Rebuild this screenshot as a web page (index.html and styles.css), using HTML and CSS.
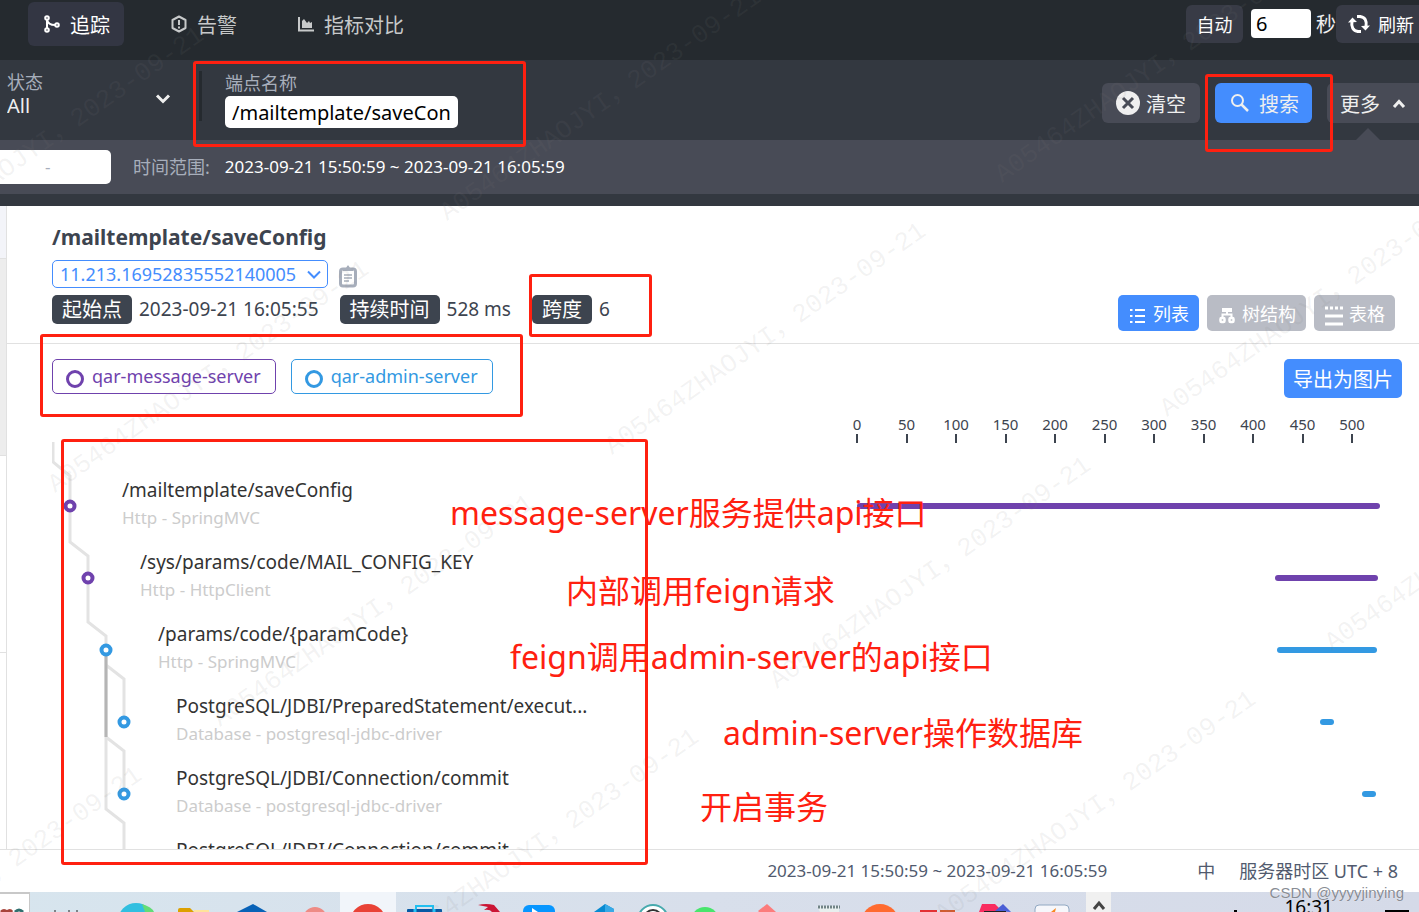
FILE: index.html
```html
<!DOCTYPE html>
<html lang="zh-CN">
<head>
<meta charset="utf-8">
<title>追踪</title>
<link rel="stylesheet" href="styles.css">
</head>
<body>
<header class="topbar">
  <nav class="tabs">
    <a class="tab active" href="#trace"><svg width="16" height="18" viewBox="0 0 16 18" fill="none" stroke="currentColor" stroke-width="2"><circle cx="3" cy="3" r="1.8"/><circle cx="3" cy="15" r="1.8"/><circle cx="13" cy="10" r="1.8"/><path d="M3 5v8M3 5c1 4 4 5 8 5"/></svg>追踪</a>
    <a class="tab" href="#alarm"><svg width="16" height="18" viewBox="0 0 16 18" fill="none" stroke="currentColor" stroke-width="2"><path d="M8 1.500l6.500 3.500v8L8 16.500 1.500 13V5z" stroke-linejoin="round"/><path d="M8 5v5M8 11.500v2"/></svg>告警</a>
    <a class="tab" href="#compare"><svg width="16" height="18" viewBox="0 0 16 18"><path d="M1 2v13.500h15" fill="none" stroke="currentColor" stroke-width="2"/><path d="M4 13V6l2-2 3 4 2-2 1 2 2-1v6z" fill="currentColor"/></svg>指标对比</a>
  </nav>
  <div class="reload">
    <button class="dark-btn auto" type="button">自动</button>
    <input class="seconds" type="text" value="6" aria-label="秒">
    <span class="unit">秒</span>
    <button class="dark-btn refresh" type="button"><svg width="22" height="20" viewBox="0 0 22 20" fill="none" stroke="currentColor" stroke-width="3"><path d="M10 17.500C5 17 3 13 4 7M12 2.500c5 .5 7 4 6 10"/><path d="M0 8.500L4.500 3.500 9 8zM22 11.500L17.500 16.500 13 12z" fill="currentColor" stroke="none"/><path d="M9 2.500h4M9 17.500h4"/></svg>刷新</button>
  </div>
</header>

<section class="filters">
  <div class="state">
    <label for="state">状态</label>
    <select id="state"><option>All</option></select>
    <svg class="state-arrow" width="16" height="10" viewBox="0 0 16 10" fill="none" stroke="currentColor" stroke-width="3"><path d="M2 1.500l6 6 6-6"/></svg>
  </div>
  <div class="endpoint">
    <label for="endpoint">端点名称</label>
    <input id="endpoint" type="text" value="/mailtemplate/saveCon">
  </div>
  <div class="actions">
    <button class="btn clear" type="button"><svg width="24" height="24" viewBox="0 0 24 24"><circle cx="12" cy="12" r="12" fill="#efefef"/><path d="M7 7l10 10M17 7L7 17" stroke="#484b56" stroke-width="3"/></svg>清空</button>
    <button class="btn search" type="button"><svg width="18" height="18" viewBox="0 0 18 18" fill="none" stroke="currentColor" stroke-width="2"><circle cx="6.500" cy="6.500" r="5.500"/><path d="M10.500 10.500l6.500 6.500" stroke-width="2.500"/></svg>搜索</button>
    <button class="btn more" type="button">更多<svg width="14" height="9" viewBox="0 0 14 9" fill="none" stroke="currentColor" stroke-width="3"><path d="M2 8l5-5.500L12 8"/></svg></button>
  </div>
</section>

<section class="range">
  <input class="duration" type="text" value="-" aria-label="持续时间">
  <span class="range-label">时间范围:</span>
  <span class="range-value">2023-09-21 15:50:59 ~ 2023-09-21 16:05:59</span>
</section>

<main class="content">
  <aside class="trace-list"><div class="item first"></div><div class="item selected"></div><div class="item"></div></aside>
  <article class="detail">
    <header class="detail-head">
      <h1>/mailtemplate/saveConfig</h1>
      <div class="id-row">
        <div class="trace-id">
          <select aria-label="Trace ID"><option>11.213.16952835552140005</option></select>
          <svg width="14" height="9" viewBox="0 0 14 9" fill="none" stroke="currentColor" stroke-width="2"><path d="M1 1.500l6 6 6-6"/></svg>
        </div>
        <button class="copy" type="button" aria-label="复制"><svg width="18" height="23" viewBox="0 0 18 23"><rect x="1.500" y="4" width="15" height="17" rx="2.500" fill="none" stroke="#a7aebb" stroke-width="3"/><path d="M4 6V3h3l1.500-2.500h1L11 3h3v3z" fill="#a7aebb"/><path d="M5 10h8M5 13h8M5 16h5" stroke="#a7aebb" stroke-width="1.500"/></svg></button>
      </div>
      <div class="meta-row">
        <div class="meta">
          <span class="tag">起始点</span><span class="value">2023-09-21 16:05:55</span>
          <span class="tag">持续时间</span><span class="value">528 ms</span>
          <span class="tag">跨度</span><span class="value">6</span>
        </div>
        <div class="views">
          <button class="view on" type="button"><svg width="16" height="18" viewBox="0 0 16 18" stroke="currentColor" stroke-width="2"><path d="M5 4h10M5 10h10M5 16h10"/><path d="M0 4h2.500M0 10h2.500M0 16h2.500"/></svg>列表</button>
          <button class="view" type="button"><svg width="16" height="18" viewBox="0 0 16 18" fill="none" stroke="currentColor"><path d="M3 2h10v4H3z" fill="currentColor" stroke="none"/><path d="M8 5v3M3.500 12V8.500h9V12" stroke-width="2"/><rect x="1.500" y="12" width="4" height="4" rx="1" stroke-width="2.500"/><rect x="10.500" y="12" width="4" height="4" rx="1" stroke-width="2.500"/></svg>树结构</button>
          <button class="view table" type="button"><svg width="20" height="22" viewBox="0 0 20 22" stroke="currentColor" stroke-width="3"><path d="M1 4h18" stroke-dasharray="3 2"/><path d="M1 12h18M1 20h18"/></svg>表格</button>
        </div>
      </div>
    </header>

    <div class="legend-row">
      <div class="legend">
        <span class="service purple"><i class="ring"></i>qar-message-server</span>
        <span class="service blue"><i class="ring"></i>qar-admin-server</span>
      </div>
      <button class="export" type="button">导出为图片</button>
    </div>

    <div class="axis-row">
      <div class="axis">
        <span>0</span><span>50</span><span>100</span><span>150</span><span>200</span><span>250</span><span>300</span><span>350</span><span>400</span><span>450</span><span>500</span>
      </div>
    </div>

    <div class="tree">
      <svg class="links" width="90" height="440" viewBox="0 0 90 440" fill="none" stroke-width="3">
        <g stroke="#e3e3e3">
          <path d="M1 0v20l17 14v66l18 14v66l18 14v20"/>
          <path d="M54 208v54M54 223l18 14v42M54 262v90M54 295l18 14v42M54 352v15l18 14v60"/>
        </g>
        <path d="M54 210v85" stroke="#b5b5b5"/>
        <g fill="#fff" stroke-width="4"><g stroke="#6f42ad"><circle cx="18" cy="64" r="4.500"/><circle cx="36" cy="136" r="4.500"/></g>
        <g stroke="#3399e2"><circle cx="54" cy="208" r="4.500"/><circle cx="72" cy="280" r="4.500"/><circle cx="72" cy="352" r="4.500"/></g></g>
      </svg>
      <ul class="spans">
        <li class="span d1"><div class="name"><b>/mailtemplate/saveConfig</b><small>Http - SpringMVC</small></div><div class="line"><i class="bar purple" style="margin-left:0%;width:100%"></i></div></li>
        <li class="span d2"><div class="name"><b>/sys/params/code/MAIL_CONFIG_KEY</b><small>Http - HttpClient</small></div><div class="line"><i class="bar purple" style="margin-left:79.9%;width:19.7%"></i></div></li>
        <li class="span d3"><div class="name"><b>/params/code/{paramCode}</b><small>Http - SpringMVC</small></div><div class="line"><i class="bar blue" style="margin-left:80.3%;width:19.1%"></i></div></li>
        <li class="span d4"><div class="name"><b>PostgreSQL/JDBI/PreparedStatement/execut...</b><small>Database - postgresql-jdbc-driver</small></div><div class="line"><i class="bar blue" style="margin-left:88.5%;width:2.7%"></i></div></li>
        <li class="span d4"><div class="name"><b>PostgreSQL/JDBI/Connection/commit</b><small>Database - postgresql-jdbc-driver</small></div><div class="line"><i class="bar blue" style="margin-left:96.6%;width:2.7%"></i></div></li>
        <li class="span d4"><div class="name"><b>PostgreSQL/JDBI/Connection/commit</b></div></li>
      </ul>
    </div>
  </article>
</main>

<footer class="status">
  <span>2023-09-21 15:50:59 ~ 2023-09-21 16:05:59</span>
  <span class="lang">中</span>
  <span class="zone">服务器时区 UTC + 8</span>
</footer>

<div class="taskbar">
  <svg class="apps" width="1419" height="20" viewBox="0 0 1419 20">
    <rect width="30" height="20" fill="#c8c8c8"/><rect y="2" width="29" height="18" fill="#fff"/>
    <path d="M1 20q3-3 6 0M7 20q3-3 5 0" stroke="#a8433b" stroke-width="3" fill="none"/><path d="M15 20q4-4 8 0" stroke="#31706f" stroke-width="3" fill="none"/>
    <path d="M55 18v2M69 18v2M77 18v2" stroke="#222" stroke-width="1"/>
    <circle cx="136" cy="29" r="18" fill="#31bfe0"/><path d="M142 12q10 3 12 8h-9z" fill="#63dc76"/>
    <path d="M178 20v-2q0-2 2-2h10l4 4z" fill="#dda000"/><path d="M194 18h15v2h-15z" fill="#ffe39a"/>
    <path d="M237 20l16-8 14 8z" fill="#0862b7"/>
    <circle cx="315" cy="27" r="12" fill="#ee8b85"/>
    <rect x="340" width="56" height="20" fill="#f1f5fa"/><circle cx="368" cy="30" r="18" fill="#e94236"/>
    <path d="M416 18v-4h17v4" fill="none" stroke="#22bff0" stroke-width="2"/><rect x="407" y="17" width="35" height="7" rx="1" fill="#0759a5"/><path d="M415 17v3M434 17v3" stroke="#25c3f5" stroke-width="3"/>
    <path d="M478 13q8-2 16 0l6 7h-8q-2-3-8-2l4-3z" fill="#cb1635"/>
    <rect x="523" y="13" width="32" height="15" rx="6" fill="#0796ff"/><path d="M532 16l6 4h-6z" fill="#fff"/>
    <path d="M594 20l11-8 9 5v3z" fill="#078ad1"/><path d="M605 12l9 5v3h-9z" fill="#38a9e6"/>
    <circle cx="653" cy="28" r="15" fill="#fff" stroke="#47aaad" stroke-width="2"/><circle cx="653" cy="27" r="9" fill="none" stroke="#333" stroke-width="2"/>
    <circle cx="705" cy="29" r="14" fill="#48e56c"/><path d="M758 19l9-7 9 8h-17z" fill="#fc7c7c"/>
    <path d="M817 14h22v6h-19z" fill="#e8efee"/><path d="M818 15h22" stroke="#718386" stroke-width="3" stroke-dasharray="2 1"/>
    <circle cx="880" cy="31" r="19" fill="#ff6b30"/><path d="M920 18h17v2h-17z" fill="#e33134"/><path d="M940 18h15v2h-15z" fill="#d05b2f"/>
    <path d="M979 20l3-8h13l8 8z" fill="#f92d60"/><path d="M995 19l8-7 8 8z" fill="#4a5ed5"/><path d="M984 19h22v1h-22z" fill="#222"/>
    <rect x="1035" y="13" width="34" height="16" rx="4" fill="#f6f7fb" stroke="#91a8c2"/><path d="M1051 20l5-4-1 4z" fill="#f88620"/>
    <rect x="1086" width="25" height="20" fill="#f0f0f0"/><path d="M1094 17l5-6 5 6" fill="none" stroke="#444" stroke-width="3"/>
    <rect x="1234" y="18" width="3" height="2"/><rect x="1385" y="18" width="24" height="2"/>
  </svg>
  <time class="clock">16:31</time>
</div>

<svg class="watermarks" width="100%" height="100%" aria-hidden="true">
  <g transform="translate(-5 1)">
    <text transform="translate(-105 258) rotate(-35)">A05464ZHAOJYI，2023-09-21</text>
    <text transform="translate(60 492) rotate(-35)">A05464ZHAOJYI，2023-09-21</text>
    <text transform="translate(225 726) rotate(-35)">A05464ZHAOJYI，2023-09-21</text>
    <text transform="translate(390 960) rotate(-35)">A05464ZHAOJYI，2023-09-21</text>
    <text transform="translate(452 220) rotate(-35)">A05464ZHAOJYI，2023-09-21</text>
    <text transform="translate(617 454) rotate(-35)">A05464ZHAOJYI，2023-09-21</text>
    <text transform="translate(782 688) rotate(-35)">A05464ZHAOJYI，2023-09-21</text>
    <text transform="translate(947 922) rotate(-35)">A05464ZHAOJYI，2023-09-21</text>
    <text transform="translate(1007 182) rotate(-35)">A05464ZHAOJYI，2023-09-21</text>
    <text transform="translate(1172 416) rotate(-35)">A05464ZHAOJYI，2023-09-21</text>
    <text transform="translate(1337 650) rotate(-35)">A05464ZHAOJYI，2023-09-21</text>
    <text transform="translate(-167 998) rotate(-35)">A05464ZHAOJYI，2023-09-21</text>
  </g>
</svg>

<div class="notes">
  <i class="box b1"></i><i class="box b2"></i><i class="box b3"></i><i class="box b4"></i><i class="box b5"></i>
  <span class="note n1">message-server服务提供api接口</span>
  <span class="note n2">内部调用feign请求</span>
  <span class="note n3">feign调用admin-server的api接口</span>
  <span class="note n4">admin-server操作数据库</span>
  <span class="note n5">开启事务</span>
  <span class="credit">CSDN @yyyyjinying</span>
</div>
</body>
</html>
```
FILE: styles.css
```css
* { box-sizing: border-box; }
body {
  margin: 0;
  height: 100vh;
  overflow: hidden;
  display: flex;
  flex-direction: column;
  position: relative;
  background: #fff;
  color: #3d444f;
  font-family: "Noto Sans", "Noto Sans CJK SC", sans-serif;
  font-size: 18px;
}
button, input, select { font: inherit; color: inherit; border: 0; margin: 0; }
button { padding: 0; white-space: nowrap; }
svg { flex: none; }
i { font-style: normal; }

.topbar { flex: none; height: 60px; background: #252a2f; color: #efefef; display: flex; justify-content: space-between; overflow: hidden; }
.tabs { display: flex; gap: 31px; padding: 2px 0 0 28px; }
.tab { height: 44px; padding: 0 14px 0 16px; display: flex; align-items: center; gap: 10px; border-radius: 6px; color: #c7c9ca; font-size: 20px; text-decoration: none; }
.tab.active { background: #333643; color: #fff; }
.reload { display: flex; align-items: flex-start; padding-top: 5px; margin-right: -6px; }
.dark-btn { height: 38px; background: #383b46; border-radius: 6px; color: #fff; }
.auto { width: 57px; }
.seconds { width: 60px; height: 29px; margin: 4px 5px 0 8px; padding: 0 5px; border-radius: 4px; background: #fff; color: #000; font-size: 20px; }
.unit { font-size: 20px; line-height: 40px; }
.refresh { width: 89px; padding-left: 12px; display: flex; align-items: center; gap: 8px; }

.filters { flex: none; height: 80px; padding-left: 7px; background: #333840; color: #efefef; display: flex; align-items: flex-start; overflow: hidden; }
.filters label { display: block; color: #a7aebb; font-size: 18px; line-height: 22px; }
.state { position: relative; width: 195px; height: 50px; margin-top: 11px; border-right: 3px solid #252a2f; }
.state select { appearance: none; width: 180px; height: 26px; padding: 0; background: transparent; font-size: 20px; line-height: 24px; }
.state-arrow { position: absolute; right: 28px; top: 23px; pointer-events: none; }
.endpoint { margin: 12px 0 0 23px; }
.endpoint input { display: block; width: 233px; height: 32px; margin-top: 2px; padding: 0 7px; border-radius: 5px; background: #fff; color: #000; font-size: 20px; }
.actions { margin: 23px -10px 0 auto; display: flex; gap: 15px; }
.btn { height: 40px; border-radius: 6px; background: #484b56; color: #efefef; font-size: 20px; display: flex; align-items: center; }
.clear { width: 98px; padding-left: 14px; gap: 6px; }
.search { width: 97px; padding-left: 16px; gap: 10px; background: #448dfe; }
.more { position: relative; width: 102px; padding-left: 13px; gap: 12px; overflow: visible; }
.more::after { content: ""; position: absolute; left: 29px; top: 45px; border: 12px solid transparent; border-top: 0; border-bottom-color: #484b56; }

.range { flex: none; height: 66px; padding-top: 10px; background: #484b56; border-bottom: 12px solid #333840; color: #fff; display: flex; align-items: flex-start; line-height: 34px; }
.duration { width: 111px; height: 34px; padding: 0 45px; border-radius: 0 5px 5px 0; background: #fff; color: #a7aebb; font-size: 17px; }
.range-label { margin-left: 22px; color: #a7aebb; }
.range-value { margin-left: 15px; font-size: 17px; }

.content { flex: 1; min-height: 0; display: flex; overflow: hidden; }
.trace-list { flex: none; width: 7px; border-right: 1px solid #e1e1e1; }
.item { height: 197px; border-bottom: 1px solid #e1e1e1; }
.item.first { height: 53px; background: #f3f4f9; }
.item.selected { background: #ededed; }
.detail { flex: 1; min-width: 0; }
.detail-head { padding: 16px 24px 12px 45px; border-bottom: 1px solid #e1e1e1; }
h1 { margin: 0; font-size: 21px; line-height: 30px; font-weight: 700; }
.id-row { margin-top: 8px; display: flex; gap: 11px; }
.trace-id { position: relative; color: #448dfe; }
.trace-id select { appearance: none; display: block; width: 276px; height: 28px; padding: 0 7px; border: 1px solid #448dfe; border-radius: 5px; background: #fff; line-height: 26px; }
.trace-id svg { position: absolute; right: 7px; top: 10px; pointer-events: none; }
.copy { height: 28px; padding-top: 4px; background: none; line-height: 0; }
.meta-row { margin-top: 7px; display: flex; justify-content: space-between; align-items: flex-start; }
.meta { display: flex; line-height: 29px; }
.tag { padding: 0 10px; border-radius: 5px; background: #3d444f; color: #fff; font-size: 20px; }
.value { margin: 0 21px 0 7px; font-size: 19px; }
.views { display: flex; gap: 8px; }
.view { height: 36px; padding: 0 10px 0 12px; border-radius: 5px; background: #b9bcc5; color: #fff; display: flex; align-items: center; gap: 7px; }
.view svg { margin-top: 4px; }
.view.on { background: #448dfe; }
.view.table { gap: 5px; padding-left: 10px; }

.legend-row { padding: 15px 17px 0 45px; display: flex; justify-content: space-between; align-items: flex-start; }
.legend { display: flex; gap: 15px; }
.service { height: 35px; padding: 0 14px 2px 13px; border: 1px solid; border-radius: 5px; display: flex; align-items: center; gap: 8px; }
.ring { width: 18px; height: 18px; margin-top: 6px; border: 3px solid; border-radius: 50%; }
.service.purple { color: #6f42ad; }
.service.blue { color: #3399e2; }
.export { width: 118px; height: 39px; border-radius: 5px; background: #448dfe; color: #fff; font-size: 20px; }

.axis-row, .span { display: grid; grid-template-columns: 805fr 523fr; margin-left: 45px; padding-right: 39px; }
.axis-row { padding-top: 16px; }
.axis { grid-column: 2; display: grid; grid-template-columns: repeat(11, 9.04%); margin-left: -4.73%; font-size: 15px; line-height: 20px; text-align: center; }
.axis span::after { content: ""; display: block; width: 2px; height: 9px; margin: 0 auto; background: #3d444f; }
.tree { position: relative; padding-top: 27px; }
.links { position: absolute; left: 45px; top: -1px; }
.spans { list-style: none; margin: 0; padding: 0; }
.span { height: 72px; }
.name { padding-top: 8px; white-space: nowrap; color: #333; }
.name b, .name small { display: block; font-weight: 400; line-height: 24px; font-size: 19px; }
.name small { margin-top: 4px; font-size: 17px; color: #ccc; }
.d1 .name { padding-left: 70px; }
.d2 .name { padding-left: 88px; }
.d3 .name { padding-left: 106px; }
.d4 .name { padding-left: 124px; }
.line { padding-top: 33px; }
.bar { display: block; height: 6px; border-radius: 3px; }
.bar.purple { background: #6f42ad; }
.bar.blue { background: #3399e2; }

.status { flex: none; height: 43px; padding-right: 21px; border-top: 1px solid #e1e1e1; background: #fff; color: #515a6e; display: flex; justify-content: flex-end; font-size: 17px; line-height: 42px; }
.lang, .zone { font-size: 18px; }
.lang { margin: 0 24px 0 90px; }
.taskbar { flex: none; position: relative; height: 20px; overflow: hidden; background: linear-gradient(90deg, #d7e5ee, #d8dfeb 50%, #d5dae8); color: #000; }
.apps { display: block; }
.clock { position: absolute; right: 86px; top: 2px; font-size: 19px; line-height: 26px; }

.watermarks { position: absolute; inset: 0; pointer-events: none; }
.watermarks text { fill: #808080; fill-opacity: .1; font: 26px "Liberation Mono", "Noto Sans CJK SC", monospace; }
.notes { position: absolute; inset: 0; overflow: hidden; pointer-events: none; }
.box { position: absolute; border: 3px solid #ff2010; border-radius: 3px; }
.b1 { left: 193px; top: 61px; width: 333px; height: 86px; }
.b2 { left: 1205px; top: 74px; width: 128px; height: 78px; }
.b3 { left: 529px; top: 274px; width: 123px; height: 63px; }
.b4 { left: 40px; top: 334px; width: 483px; height: 83px; }
.b5 { left: 61px; top: 439px; width: 587px; height: 426px; }
.note { position: absolute; color: #ff2010; font-size: 32px; line-height: 40px; white-space: nowrap; }
.n1 { left: 450px; top: 493px; }
.n2 { left: 566px; top: 571px; }
.n3 { left: 510px; top: 637px; }
.n4 { left: 723px; top: 713px; }
.n5 { left: 700px; top: 787px; }
.credit { position: absolute; right: 15px; top: 883px; color: #888c94; font: 15px/20px "Liberation Sans", sans-serif; text-shadow: 0 0 1px #fff; }
```
